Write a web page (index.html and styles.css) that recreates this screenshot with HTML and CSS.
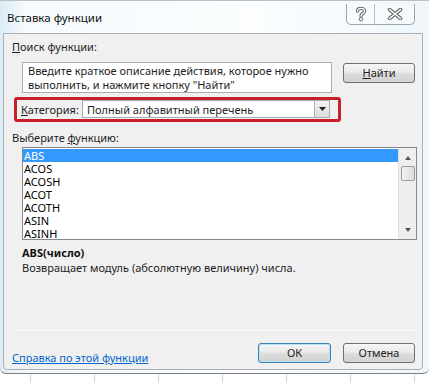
FILE: index.html
```html
<!DOCTYPE html>
<html lang="ru">
<head>
<meta charset="utf-8">
<title>Вставка функции</title>
<link rel="stylesheet" href="styles.css">
</head>
<body>
<div class="window">
  <div class="titlebar">
    <span class="title">Вставка функции</span>
    <div class="tbuttons">
      <span class="tbtn help">
        <svg width="14" height="16" viewBox="0 0 14 16"><path d="M3.5 5 C3.5 1.5 10.5 1.5 10.5 5 C10.5 7.5 7 7.5 7 10" fill="none" stroke="#6b6b6b" stroke-width="3.4" stroke-linecap="round"/><path d="M3.5 5 C3.5 1.5 10.5 1.5 10.5 5 C10.5 7.5 7 7.5 7 10" fill="none" stroke="#fff" stroke-width="1.4" stroke-linecap="round"/><circle cx="7" cy="13.2" r="1.7" fill="#fff" stroke="#6b6b6b" stroke-width="1"/></svg>
      </span>
      <span class="tbtn close">
        <svg width="16" height="12" viewBox="0 0 16 12"><path d="M2.5 1.5 L13.5 10.5 M13.5 1.5 L2.5 10.5" stroke="#6b6b6b" stroke-width="3.6" stroke-linecap="round"/><path d="M2.5 1.5 L13.5 10.5 M13.5 1.5 L2.5 10.5" stroke="#fff" stroke-width="1.6" stroke-linecap="round"/></svg>
      </span>
    </div>
  </div>
  <div class="panel">
    <div class="label first"><u>П</u>оиск функции:</div>
    <div class="search-row">
      <div class="searchbox">Введите краткое описание действия, которое нужно<br>выполнить, и нажмите кнопку "Найти"</div>
      <button class="btn find"><u>Н</u>айти</button>
    </div>
    <div class="category">
      <span class="cat-label"><u>К</u>атегория:</span>
      <div class="select">
        <span class="select-text">Полный алфавитный перечень</span>
        <span class="select-arrow"><svg width="7" height="4" viewBox="0 0 7 4"><path d="M0 0 H7 L3.5 4 Z" fill="#222"/></svg></span>
      </div>
    </div>
    <div class="label choose">Выберите <u>ф</u>ункцию:</div>
    <div class="listbox">
      <ul class="items">
        <li class="selected">ABS</li>
        <li>ACOS</li>
        <li>ACOSH</li>
        <li>ACOT</li>
        <li>ACOTH</li>
        <li>ASIN</li>
        <li>ASINH</li>
      </ul>
      <div class="scrollbar">
        <span class="arrow up"></span>
        <span class="thumb"></span>
        <span class="spacer"></span>
        <span class="arrow down"></span>
      </div>
    </div>
    <div class="signature">ABS(число)</div>
    <div class="description">Возвращает модуль (абсолютную величину) числа.</div>
    <div class="separator"></div>
    <div class="footer">
      <a class="help-link" href="#">Справка по этой функции</a>
      <button class="btn ok">ОК</button>
      <button class="btn cancel">Отмена</button>
    </div>
  </div>
</div>
<div class="sheet">
  <span></span><span></span><span></span><span></span><span></span><span></span><span></span>
</div>
</body>
</html>
```

FILE: styles.css
```css
* { box-sizing: border-box; }
html, body { margin: 0; padding: 0; }
body {
  width: 429px;
  height: 383px;
  overflow: hidden;
  background: #ffffff;
  font-family: "Noto Sans", "Segoe UI", sans-serif;
  font-size: 11px;
  color: #1e1e1e;
}
.window {
  width: 429px;
  height: 374px;
  border-top: 1px solid #b9c0c6;
  border-bottom: 1px solid #7b7f85;
  border-radius: 0 0 6px 6px;
  background: linear-gradient(90deg, #dcecf6 0%, #f6fafd 6%, #fbfdfe 60%, #eef6fb 100%);
  padding: 0 6px 3px 3px;
  display: flex;
  flex-direction: column;
}
.titlebar {
  height: 32px;
  display: flex;
  align-items: flex-start;
  padding-left: 4px;
}
.title {
  margin-top: 9px;
  font-size: 11.5px;
  color: #111;
}
.tbuttons {
  margin-left: auto;
  margin-right: 8px;
  margin-top: 3px;
  display: flex;
  height: 21px;
  border: 1px solid #9fa6ad;
  border-top: none;
  border-radius: 0 0 5px 5px;
  background: rgba(255,255,255,0.4);
}
.tbtn {
  display: flex;
  align-items: center;
  justify-content: center;
}
.tbtn.help { width: 28px; border-right: 1px solid #b5bbc1; }
.tbtn.close { width: 39px; }
.panel {
  flex: 1;
  background: #f0f0f0;
  border: 1px solid #aab0b8;
  border-radius: 0 0 4px 4px;
  padding: 0 5px 0 8px;
  display: flex;
  flex-direction: column;
}
.label { line-height: 15px; height: 15px; }
.label.first { margin-top: 5px; }
.search-row {
  display: flex;
  align-items: flex-start;
  margin-top: 8px;
  padding-left: 10px;
}
.searchbox {
  width: 310px;
  height: 31px;
  background: #fff;
  border: 1px solid #abadb3;
  padding: 1px 0 0 5px;
  line-height: 14px;
  white-space: nowrap;
  overflow: hidden;
}
.btn {
  font-family: inherit;
  font-size: 11px;
  color: #1e1e1e;
  height: 20px;
  border: 1px solid #707070;
  border-radius: 3px;
  background: linear-gradient(#f6f6f6 0%, #eaeaea 45%, #dcdcdc 55%, #d2d2d2 100%);
  padding: 0;
  line-height: 16px;
}
.btn.find { width: 72px; margin-left: 11px; margin-top: 1px; }
.category {
  margin-top: 4px;
  margin-left: 2px;
  width: 327px;
  height: 25px;
  border: 3px solid #c8202b;
  border-radius: 3px;
  display: flex;
  align-items: flex-start;
  padding-left: 4px;
  padding-right: 8px;
}
.cat-label { line-height: 15px; margin-top: 2px; width: 61px; }
.select {
  flex: 1;
  height: 18px;
  background: #fff;
  border: 1px solid #abadb3;
  display: flex;
  align-items: center;
  padding-left: 4px;
}
.select-text { flex: 1; line-height: 15px; }
.select-arrow {
  width: 15px;
  height: 16px;
  border-left: 1px solid #b0b0b0;
  background: linear-gradient(#f4f4f4, #dcdcdc);
  display: flex;
  align-items: center;
  justify-content: center;
}
.label.choose { margin-top: 8px; }
.listbox {
  margin-top: 2px;
  margin-left: 10px;
  width: 395px;
  height: 93px;
  border: 1px solid #828790;
  background: #fff;
  display: flex;
}
.items {
  list-style: none;
  margin: 0;
  padding: 1px 0 0 0;
  flex: 1;
}
.items li {
  height: 13px;
  line-height: 13px;
  padding-left: 1px;
  color: #000;
}
.items li.selected { background: #3399ff; color: #fff; }
.scrollbar {
  width: 18px;
  background: #eeeeee;
  border-left: 1px solid #e0e0e0;
  display: flex;
  flex-direction: column;
  align-items: center;
}
.arrow { width: 0; height: 0; border-left: 3.5px solid transparent; border-right: 3.5px solid transparent; }
.arrow.up { border-bottom: 4px solid #555; margin-top: 8px; }
.arrow.down { border-top: 4px solid #555; margin-bottom: 7px; }
.thumb {
  width: 14px;
  height: 15px;
  margin-top: 6px;
  border: 1px solid #9a9a9a;
  border-radius: 2px;
  background: linear-gradient(90deg, #f2f2f2, #dcdcdc);
}
.spacer { flex: 1; }
.signature {
  margin-top: 5px;
  margin-left: 10px;
  font-weight: bold;
  line-height: 15px;
  color: #111;
}
.description {
  margin-left: 10px;
  line-height: 15px;
}
.separator {
  margin-top: 55px;
  height: 1px;
  background: #dcdcdc;
  border-bottom: 1px solid #fbfbfb;
}
.footer {
  display: flex;
  align-items: flex-start;
  margin-top: 12px;
}
.help-link {
  color: #0066cc;
  text-decoration: underline;
  line-height: 15px;
  margin-top: 7px;
}
.btn.ok {
  width: 73px;
  margin-left: auto;
  border: 1px solid #3c7fb1;
  box-shadow: inset 0 0 0 1px #b5e2f8;
}
.btn.cancel { width: 72px; margin-left: 12px; margin-right: 2px; }
.sheet {
  height: 9px;
  display: flex;
  padding-left: 30px;
  gap: 63px;
}
.sheet span { width: 1px; background: #d4d4d4; }
```
